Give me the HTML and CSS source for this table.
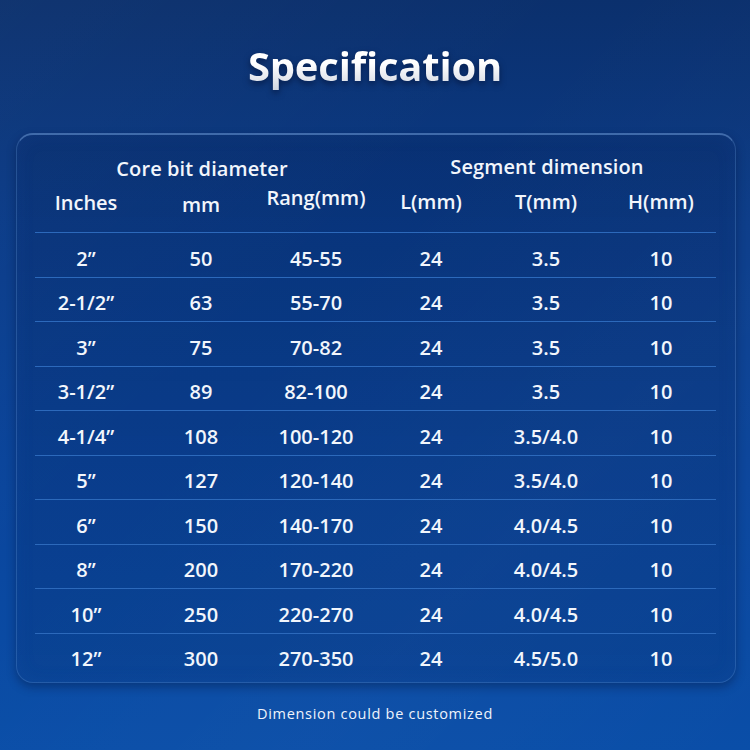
FILE: index.html
```html
<!DOCTYPE html>
<html lang="en">
<head>
<meta charset="utf-8">
<title>Specification</title>
<link rel="stylesheet" href="styles.css">
</head>
<body>
<div class="page">
  <header class="title-wrap">
    <h1 class="title">Specification</h1>
  </header>
  <section class="card">
    <div class="head">
      <div class="group-row">
        <div class="group g-core">Core bit diameter</div>
        <div class="group g-seg">Segment dimension</div>
      </div>
      <div class="cols grid">
        <div class="h-inches">Inches</div>
        <div class="h-mm">mm</div>
        <div class="h-rang">Rang(mm)</div>
        <div>L(mm)</div>
        <div>T(mm)</div>
        <div>H(mm)</div>
      </div>
    </div>
    <div class="rows">
      <div class="row"><div class="grid"><div>2”</div><div>50</div><div>45-55</div><div>24</div><div>3.5</div><div>10</div></div></div>
      <div class="row"><div class="grid"><div>2-1/2”</div><div>63</div><div>55-70</div><div>24</div><div>3.5</div><div>10</div></div></div>
      <div class="row"><div class="grid"><div>3”</div><div>75</div><div>70-82</div><div>24</div><div>3.5</div><div>10</div></div></div>
      <div class="row"><div class="grid"><div>3-1/2”</div><div>89</div><div>82-100</div><div>24</div><div>3.5</div><div>10</div></div></div>
      <div class="row"><div class="grid"><div>4-1/4”</div><div>108</div><div>100-120</div><div>24</div><div>3.5/4.0</div><div>10</div></div></div>
      <div class="row"><div class="grid"><div>5”</div><div>127</div><div>120-140</div><div>24</div><div>3.5/4.0</div><div>10</div></div></div>
      <div class="row"><div class="grid"><div>6”</div><div>150</div><div>140-170</div><div>24</div><div>4.0/4.5</div><div>10</div></div></div>
      <div class="row"><div class="grid"><div>8”</div><div>200</div><div>170-220</div><div>24</div><div>4.0/4.5</div><div>10</div></div></div>
      <div class="row"><div class="grid"><div>10”</div><div>250</div><div>220-270</div><div>24</div><div>4.0/4.5</div><div>10</div></div></div>
      <div class="row last"><div class="grid"><div>12”</div><div>300</div><div>270-350</div><div>24</div><div>4.5/5.0</div><div>10</div></div></div>
    </div>
  </section>
  <footer class="note">Dimension could be customized</footer>
</div>
</body>
</html>
```
FILE: styles.css
```css
html, body {
  margin: 0;
  padding: 0;
}
body {
  width: 750px;
  height: 750px;
  overflow: hidden;
  font-family: "Open Sans", "Liberation Sans", sans-serif;
  color: #f2f6fc;
  background:
    linear-gradient(135deg, rgba(255,255,255,0.025) 0%, rgba(255,255,255,0) 40%, rgba(255,255,255,0.02) 70%, rgba(255,255,255,0) 100%),
    linear-gradient(180deg, #0b306d 0%, #0a3b88 30%, #0a459c 65%, #0a4ea8 100%);
}
.page {
  display: flex;
  flex-direction: column;
  align-items: center;
}
.title-wrap {
  height: 133px;
  width: 100%;
  display: flex;
  justify-content: center;
  align-items: flex-start;
}
.title {
  margin: 0;
  margin-top: 38px;
  font-size: 40px;
  line-height: 56px;
  font-weight: 700;
  letter-spacing: -0.2px;
  background: linear-gradient(180deg, #ffffff 0%, #ffffff 45%, #c9d0dc 100%);
  -webkit-background-clip: text;
  background-clip: text;
  color: transparent;
  filter: drop-shadow(0 3px 3px rgba(0, 10, 40, 0.55));
}
.card {
  box-sizing: border-box;
  width: 720px;
  height: 550px;
  margin-left: 1px;
  border-radius: 17px;
  border: 1px solid rgba(110, 160, 225, 0.28);
  border-top: 2px solid rgba(130, 175, 235, 0.45);
  background: linear-gradient(180deg, rgba(6, 30, 80, 0.22) 0%, rgba(6, 30, 80, 0.18) 100%);
  box-shadow: 0 4px 10px rgba(0, 15, 50, 0.35), inset 0 0 20px rgba(60, 120, 200, 0.08);
  padding: 20px 0 0 18px;
}
.head {
  width: 681px;
  box-sizing: border-box;
  border-bottom: 1px solid #2c69bb;
  padding-bottom: 18px;
}
.grid {
  display: grid;
  grid-template-columns: repeat(6, 115px);
  margin-left: -6px;
  width: 690px;
  font-size: 20px;
  line-height: 24px;
  font-weight: 600;
  text-align: center;
}
.group-row {
  display: grid;
  grid-template-columns: 345px 345px;
  margin-left: -6px;
  width: 690px;
  font-size: 20px;
  line-height: 24px;
  font-weight: 600;
  text-align: center;
  letter-spacing: 0.1px;
}
.g-core {
  position: relative;
  top: 2px;
  margin-left: 2px;
}
.g-seg {
  margin-left: 2px;
}
.cols {
  margin-top: 11px;
}
.h-inches {
  position: relative;
  top: 1px;
}
.h-mm {
  position: relative;
  top: 3px;
}
.h-rang {
  position: relative;
  top: -4px;
}
.rows {
  width: 681px;
}
.row {
  box-sizing: border-box;
  height: 44.5px;
  border-bottom: 1px solid #2c69bb;
  padding-top: 13.5px;
}
.row.last {
  border-bottom: none;
}
.note {
  margin-top: 21px;
  font-size: 14.5px;
  line-height: 20px;
  font-weight: 400;
  letter-spacing: 0.7px;
  color: #eef3fb;
}
```
